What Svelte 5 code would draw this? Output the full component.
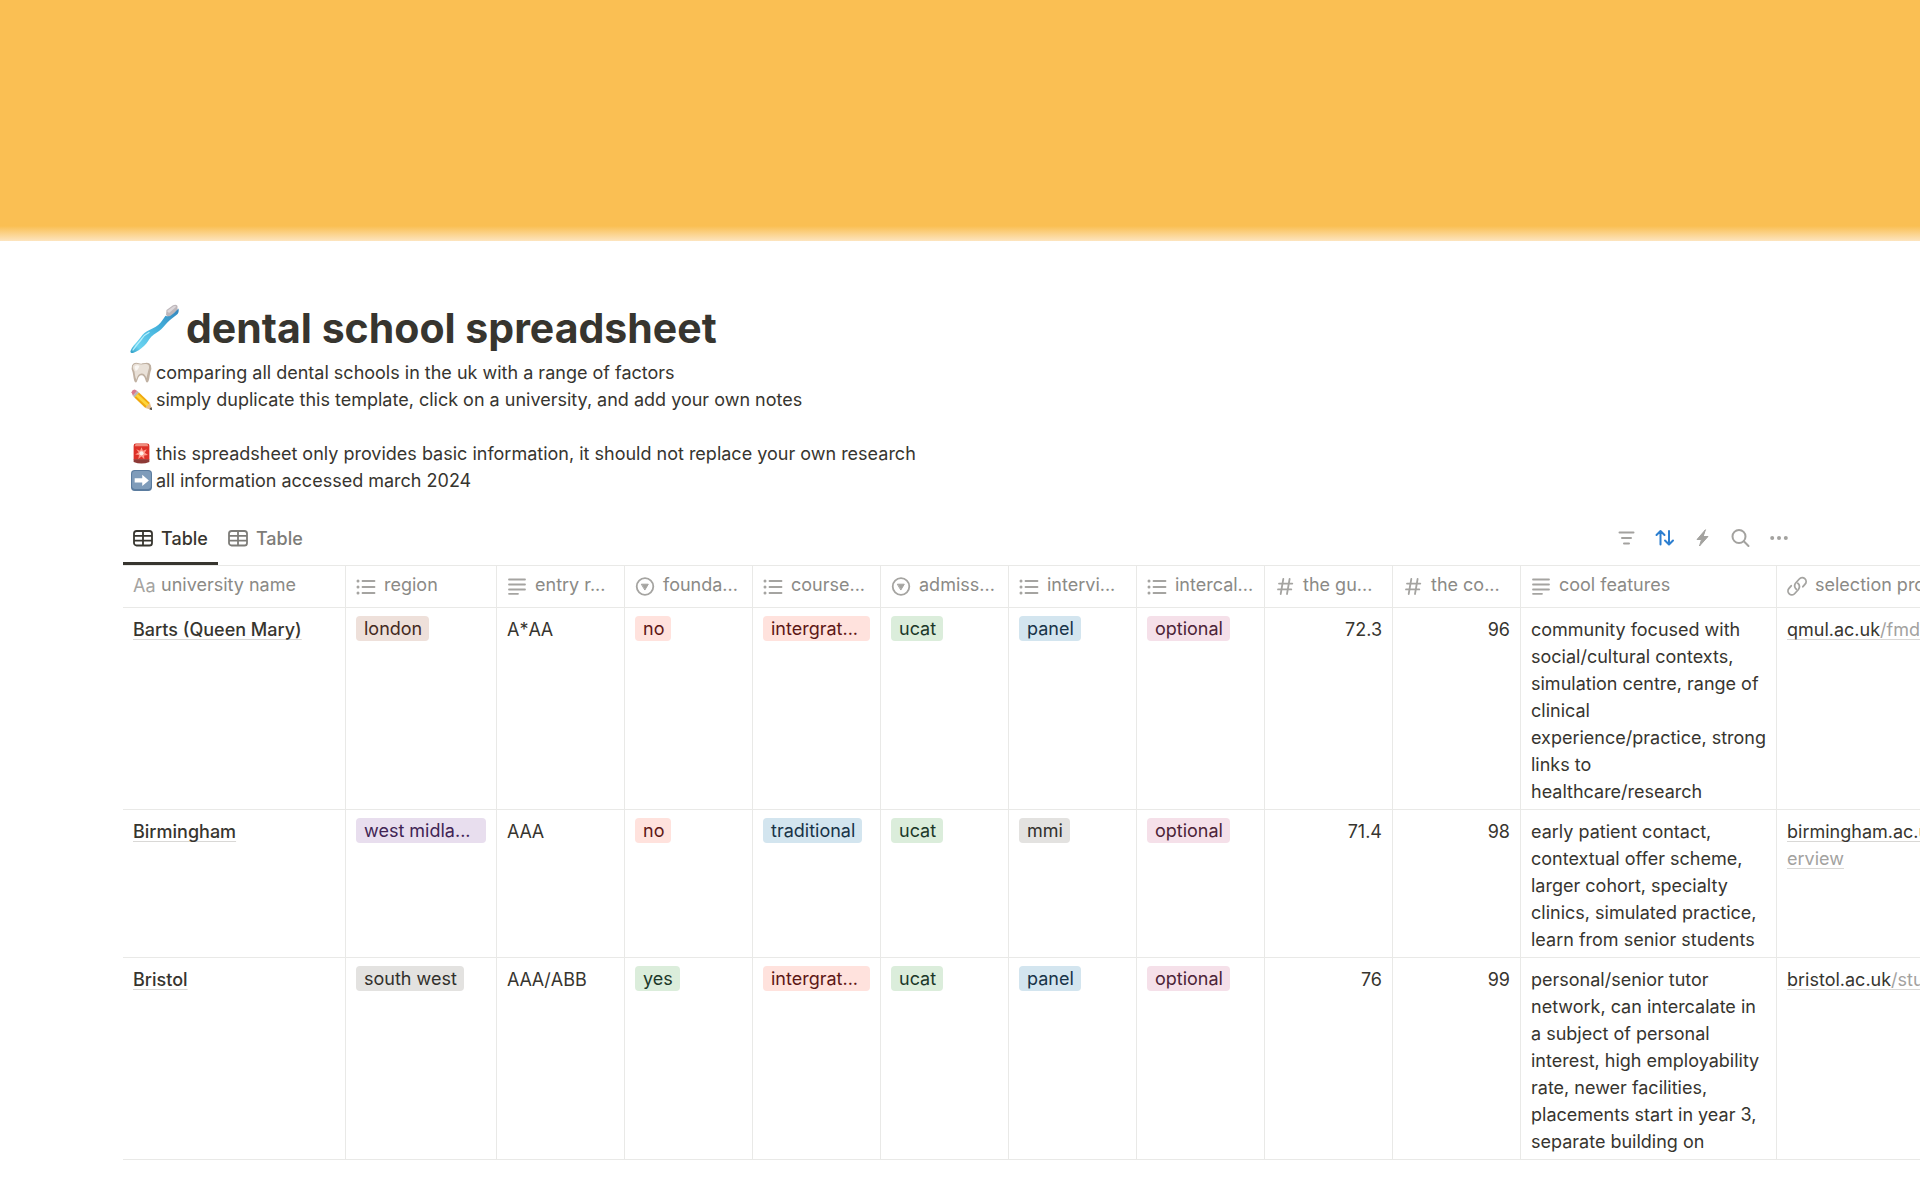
<script>
  const columns = [
    { label: 'university name', icon: 'title', size: 'name' },
    { label: 'region', icon: 'list', size: 'region' },
    { label: 'entry requirements', short: 'entry r...', icon: 'text', size: 'std' },
    { label: 'foundation year', short: 'founda...', icon: 'select', size: 'std' },
    { label: 'course style', short: 'course...', icon: 'list', size: 'std' },
    { label: 'admissions test', short: 'admiss...', icon: 'select', size: 'std' },
    { label: 'interview', short: 'intervi...', icon: 'list', size: 'std' },
    { label: 'intercalation', short: 'intercal...', icon: 'list', size: 'std' },
    { label: 'the guardian', short: 'the gu...', icon: 'number', size: 'std' },
    { label: 'the complete', short: 'the co...', icon: 'number', size: 'std' },
    { label: 'cool features', icon: 'text', size: 'wide' },
    { label: 'selection process', icon: 'link', size: 'wide' }
  ];

  const tag = (text, color) => ({ text, color });

  const rows = [
    {
      name: 'Barts (Queen Mary)',
      region: tag('london', 'brown'),
      entry: 'A*AA',
      tags: [tag('no', 'red'), tag('intergrat...', 'red fill'), tag('ucat', 'green'), tag('panel', 'blue'), tag('optional', 'pink')],
      scores: ['72.3', '96'],
      features: 'community focused with social/cultural contexts, simulation centre, range of clinical experience/practice, strong links to\nhealthcare/research',
      host: 'qmul.ac.uk',
      path: ['/fmd/study']
    },
    {
      name: 'Birmingham',
      region: tag('west midla...', 'purple fill'),
      entry: 'AAA',
      tags: [tag('no', 'red'), tag('traditional', 'blue'), tag('ucat', 'green'), tag('mmi', 'gray'), tag('optional', 'pink')],
      scores: ['71.4', '98'],
      features: 'early patient contact, contextual offer scheme, larger cohort, specialty clinics, simulated practice, learn from senior students',
      host: 'birmingham.ac.uk',
      path: ['/dental/ov', 'erview']
    },
    {
      name: 'Bristol',
      region: tag('south west', 'gray'),
      entry: 'AAA/ABB',
      tags: [tag('yes', 'green'), tag('intergrat...', 'red fill'), tag('ucat', 'green'), tag('panel', 'blue'), tag('optional', 'pink')],
      scores: ['76', '99'],
      features: 'personal/senior tutor network, can intercalate in a subject of personal interest, high employability rate, newer facilities, placements start in year 3, separate building on',
      host: 'bristol.ac.uk',
      path: ['/study']
    }
  ];
</script>

{#snippet pill(t)}
  <span class="pill {t.color}">{t.text}</span>
{/snippet}

{#snippet columnIcon(kind)}
  {#if kind === 'title'}
    <span class="aa" aria-hidden="true">Aa</span>
  {:else}
    <svg class="icon" viewBox="0 0 20 20" aria-hidden="true">
      {#if kind === 'list'}
        <path d="M6.5 5h12M6.5 11h12M6.5 17h12" />
        <path class="dots" d="M2 5h.01M2 11h.01M2 17h.01" />
      {:else if kind === 'text'}
        <path d="M2 3.5h16M2 8.5h16M2 13.5h16M2 17.8h9" />
      {:else if kind === 'select'}
        <circle cx="10" cy="10.5" r="8.3" />
        <path class="solid" d="M6.700 8.200h6.600L10 13.700z" />
      {:else if kind === 'number'}
        <path d="M8.300 3 5.700 18M14.600 3 12 18M4 7.600h13.300M3 13.400h13.300" />
      {:else}
        <path d="M9.300 13.200c-2-1.500-2.200-4.300-.6-6.200l3.600-4c1.500-1.600 4-1.700 5.500-.3 1.600 1.500 1.700 3.900.3 5.500l-2.200 2.500" />
        <path d="M10.800 7.300c2 1.500 2.200 4.300.6 6.200l-3.600 4c-1.500 1.600-4 1.700-5.500.3-1.600-1.500-1.700-3.900-.3-5.500l2.200-2.500" />
      {/if}
    </svg>
  {/if}
{/snippet}

{#snippet gridIcon()}
  <svg class="grid" viewBox="0 0 20 20" aria-hidden="true">
    <rect x="1" y="3" width="18" height="14.5" rx="2.6" />
    <path d="M1 7.8h18M1 12.600h18M10 3v14.500" />
  </svg>
{/snippet}

<main>
  <div class="cover"></div>

  <header>
    <h1>
      <svg class="brush" viewBox="1 -1 49 50" aria-hidden="true">
        <defs>
          <linearGradient id="handle" x1="0" y1="1" x2="1" y2="0">
            <stop offset="0" stop-color="#2d9cc4" />
            <stop offset=".15" stop-color="#6bd3f0" />
            <stop offset=".55" stop-color="#45b3dd" />
            <stop offset="1" stop-color="#3385bd" />
          </linearGradient>
        </defs>
        <path d="M36 11 36.500 6 43 1.300q3-1.500 4.500.7L47.500 7l-8 7z" fill="#bdb6ba" />
        <path d="M37 7l6.500-4.700q2-.8 2.700.5L39 9z" fill="#dcd7da" />
        <path d="M48.500 4.500q.8 4-1.500 6l-7 5.500c-3.500 3-5.500 6-8.500 9-3 2.800-7 4.500-10 7.500-3.300 3.500-4 6.500-7.500 9.500-3.500 3.300-7 5.500-11 7q-3 .3-2.500-2c1.500-4 5-7.500 8-11 3-3.800 4.500-6.500 8.500-8.800 4-2.200 8-3.500 11.500-6.500 3-2.800 4.500-5.500 7-9q2.500 1 5 0 4-2.500 8-7.200z" fill="url(#handle)" />
        <path d="M3 46c3-4.500 6-7.500 9-11.500 2-3 4-4.500 7-6" fill="none" stroke="#b5effc" stroke-width="1.3" stroke-linecap="round" />
      </svg>
      <span>dental school spreadsheet</span>
    </h1>
    <p>
      <svg class="emoji" viewBox="0 0 20 20" aria-hidden="true">
        <path d="M1 3Q3 0 6.500 1T10 1.600 13.500 1Q17 0 19 3q1 3-.5 6.500c-.9 3.500-1 9.500-3 10-2 .3-1.500-7-5.500-7s-3.500 7.300-5.500 7c-2-.5-2.100-6.500-3-10Q0 6 1 3z" fill="#c0b1a2" />
        <path d="M2 3.300Q3.500 1.200 6.500 2t7 0q2.500-.6 3.500 1.300.8 2.500-.8 5.700-.7 3-1.500 6.500Q13.500 11 10 11t-4.800 6Q4 15 3.300 9 1 5.500 2 3.300z" fill="#e9e1d8" />
        <path d="M3.500 4Q5.500 2.500 8 3.500q-1 4-3.500 5Q3 6 3.500 4z" fill="#faf7f3" />
      </svg>
      <span>comparing all dental schools in the uk with a range of factors</span>
    </p>
    <p>
      <svg class="emoji" viewBox="0 0 20 20" aria-hidden="true">
        <path d="M.5 3Q1 .5 3.500.5l2.500 1.500L1.800 6.500z" fill="#d9788c" />
        <path d="m1.800 6.500 4.200-4.500L7.600 3.300 3.200 8z" fill="#b6b5b9" />
        <path d="M3.200 8 7.600 3.300l10.500 10-4.400 4.700z" fill="#f0a90f" />
        <path d="m4.500 6.600 1.900-1.900L17 14.500l-2 2z" fill="#fdd53b" />
        <path d="m13.700 18 4.400-4.700L20 20z" fill="#e7bd8b" />
        <path d="m17.500 19.200 2-2.100L20 20z" fill="#333" />
      </svg>
      <span>simply duplicate this template, click on a university, and add your own notes</span>
    </p>
    <p class="spaced">
      <svg class="emoji" viewBox="0 0 20 20" aria-hidden="true">
        <path d="M4.500.5h11q2 0 2 2V16h-15V2.500q0-2 2-2z" fill="#dc3027" />
        <path d="M4.500.8h11l1 2.200h-13z" fill="#f08b7c" />
        <path d="M2.500 15.500h15V18q-7.500 3-15 0z" fill="#8d3936" />
        <path d="m10 4 1.400 3.300L15 6l-1.800 3.200 3 2.300-3.700.3.200 3.700-2.700-2.600-3 2.400.6-3.800-3.600-.6 3.300-2L5 6l3.600 1.300z" fill="#ff9a8a" />
        <circle cx="10" cy="9.800" r="2" fill="#fff0e8" />
      </svg>
      <span>this spreadsheet only provides basic information, it should not replace your own research</span>
    </p>
    <p>
      <svg class="emoji" viewBox="0 0 20 20" aria-hidden="true">
        <rect width="20" height="20" rx="3.500" fill="#5b7c9f" />
        <rect x="1" y="1" width="18" height="17" rx="3" fill="#7f9cba" />
        <path d="M3.500 7.800h7.200V4.500l6.300 5.400-6.300 5.400V12H3.500z" fill="#fff" />
      </svg>
      <span>all information accessed march 2024</span>
    </p>
  </header>

  <div class="bar">
    <nav>
      <button class="tab active">{@render gridIcon()}Table</button>
      <button class="tab">{@render gridIcon()}Table</button>
    </nav>
    <div class="tools">
      <button aria-label="Filter">
        <svg viewBox="0 0 20 20"><path d="M2.500 4.500h14M5 10h9M7 15.500h5" /></svg>
      </button>
      <button class="on" aria-label="Sort">
        <svg viewBox="0 0 20 20"><path d="M5.500 16.500V3.200M1.500 7l4-4 4 4M14 3v13.300M10 12.500l4 4 4-4" /></svg>
      </button>
      <button aria-label="Automations">
        <svg viewBox="0 0 20 20"><path class="bolt" d="M12.200 2 4 11.500h4.500L6.500 18l8.500-9.500h-4.500z" /></svg>
      </button>
      <button aria-label="Search">
        <svg viewBox="0 0 20 20"><circle cx="8" cy="8.500" r="6.500" /><path d="m12.800 13.300 4.700 4.700" /></svg>
      </button>
      <button aria-label="More">
        <svg viewBox="0 0 20 20"><path class="more" d="M3.200 10h.01M10 10h.01M16.800 10h.01" /></svg>
      </button>
    </div>
  </div>

  <table>
    <colgroup>
      {#each columns as c}<col class={c.size} />{/each}
    </colgroup>
    <thead>
      <tr>
        {#each columns as c}
          <th scope="col" title={c.label}>
            <div class="head">{@render columnIcon(c.icon)}<span>{c.short ?? c.label}</span></div>
          </th>
        {/each}
      </tr>
    </thead>
    <tbody>
      {#each rows as r}
        <tr>
          <td><a class="title" href="#top">{r.name}</a></td>
          <td>{@render pill(r.region)}</td>
          <td class="entry">{r.entry}</td>
          {#each r.tags as t}<td>{@render pill(t)}</td>{/each}
          {#each r.scores as s}<td class="num">{s}</td>{/each}
          <td class="notes">{r.features}</td>
          <td>
            <a class="url" href="#top">{r.host}<span>{r.path[0]}{#if r.path[1]}<br />{r.path[1]}{/if}</span></a>
          </td>
        </tr>
      {/each}
    </tbody>
  </table>
</main>

<style>
  :global(body) {
    margin: 0;
    background: #fff;
  }
  main {
    overflow: hidden;
    padding-bottom: 40px;
    color: #37352f;
    font: 18px/27px Inter, 'Liberation Sans', sans-serif;
  }
  .cover {
    height: 241px;
    background: linear-gradient(#fabf53 226px, #fde5bf 241px);
  }
  header {
    padding: 62px 123px 0 131px;
  }
  h1 {
    display: flex;
    align-items: center;
    gap: 6px;
    margin: 0 0 6px;
    font-size: 41px;
    line-height: 50px;
    font-weight: 700;
  }
  .brush {
    width: 49px;
    height: 50px;
    overflow: visible;
  }
  p {
    display: flex;
    align-items: center;
    gap: 4px;
    margin: 0;
  }
  .spaced {
    margin-top: 27px;
  }
  .emoji {
    width: 21px;
    height: 21px;
    flex: none;
  }
  button {
    border: 0;
    padding: 0;
    background: none;
    font: inherit;
    color: inherit;
  }
  .bar {
    display: flex;
    justify-content: space-between;
    align-items: stretch;
    height: 53px;
    margin: 18px 122px 0 123px;
  }
  nav,
  .tools {
    display: flex;
  }
  .tab {
    display: flex;
    align-items: center;
    gap: 8px;
    padding: 2px 10px 0;
    border-bottom: 3px solid transparent;
    color: #7d7c78;
    font-weight: 500;
  }
  .tab.active {
    color: #37352f;
    border-color: #37352f;
  }
  svg {
    display: block;
    flex: none;
  }
  .grid {
    width: 20px;
    height: 20px;
    fill: none;
    stroke: currentColor;
    stroke-width: 1.8;
  }
  .tools button {
    display: flex;
    align-items: center;
    justify-content: center;
    width: 38px;
    padding-bottom: 1px;
    color: #a3a29f;
  }
  .tools .on {
    color: #2d7fd0;
  }
  .tools svg {
    width: 20px;
    height: 20px;
    fill: none;
    stroke: currentColor;
    stroke-width: 2;
    stroke-linecap: round;
    stroke-linejoin: round;
  }
  .tools .bolt {
    fill: currentColor;
    stroke-width: 1;
  }
  .tools .more {
    stroke-width: 4;
  }
  table {
    width: 1910px;
    margin-left: 123px;
    table-layout: fixed;
    border-collapse: separate;
    border-spacing: 0;
    border-top: 1px solid #e9e9e7;
  }
  col.name {
    width: 223px;
  }
  col.region {
    width: 151px;
  }
  col.std {
    width: 128px;
  }
  col.wide {
    width: 256px;
  }
  th,
  td {
    box-sizing: border-box;
    padding: 8px 10px 4px;
    border-right: 1px solid #e9e9e7;
    border-bottom: 1px solid #e9e9e7;
    text-align: left;
    vertical-align: top;
  }
  th {
    padding: 5px 6px 9px 10px;
    color: #8b8a86;
    font-weight: 400;
  }
  .head {
    display: flex;
    align-items: center;
    gap: 8px;
    white-space: nowrap;
  }
  .icon {
    width: 20px;
    height: 20px;
    margin-top: 3px;
    fill: none;
    stroke: #a5a4a1;
    stroke-width: 1.8;
    stroke-linecap: round;
    stroke-linejoin: round;
  }
  .icon .dots {
    stroke-width: 3;
  }
  .icon .solid {
    fill: #a5a4a1;
    stroke-width: 1;
  }
  .aa {
    width: 20px;
    margin-top: 3px;
    line-height: 24px;
    color: #a5a4a1;
  }
  .entry {
    font-kerning: none;
  }
  .notes {
    padding-right: 8px;
    white-space: pre-line;
  }
  .num {
    text-align: right;
  }
  .pill {
    display: block;
    box-sizing: border-box;
    width: fit-content;
    height: 25px;
    padding: 0 7px 0 8px;
    border-radius: 4px;
    line-height: 25px;
    white-space: nowrap;
  }
  .fill {
    width: 100%;
  }
  .brown {
    background: #eee0da;
    color: #442a1e;
  }
  .red {
    background: #ffe2dd;
    color: #5d1715;
  }
  .green {
    background: #dbeddb;
    color: #1c3829;
  }
  .blue {
    background: #d3e5ef;
    color: #183347;
  }
  .pink {
    background: #f5e0e9;
    color: #4c2337;
  }
  .purple {
    background: #e8deee;
    color: #412454;
  }
  .gray {
    background: #e3e2e0;
    color: #32302c;
  }
  a {
    color: inherit;
    text-decoration: underline;
    text-decoration-color: #d9d8d6;
    text-decoration-thickness: 1px;
    text-decoration-skip-ink: none;
    text-underline-offset: 3px;
  }
  .title {
    font-weight: 500;
  }
  .url {
    white-space: nowrap;
  }
  .url span {
    color: #a3a29f;
  }
</style>
